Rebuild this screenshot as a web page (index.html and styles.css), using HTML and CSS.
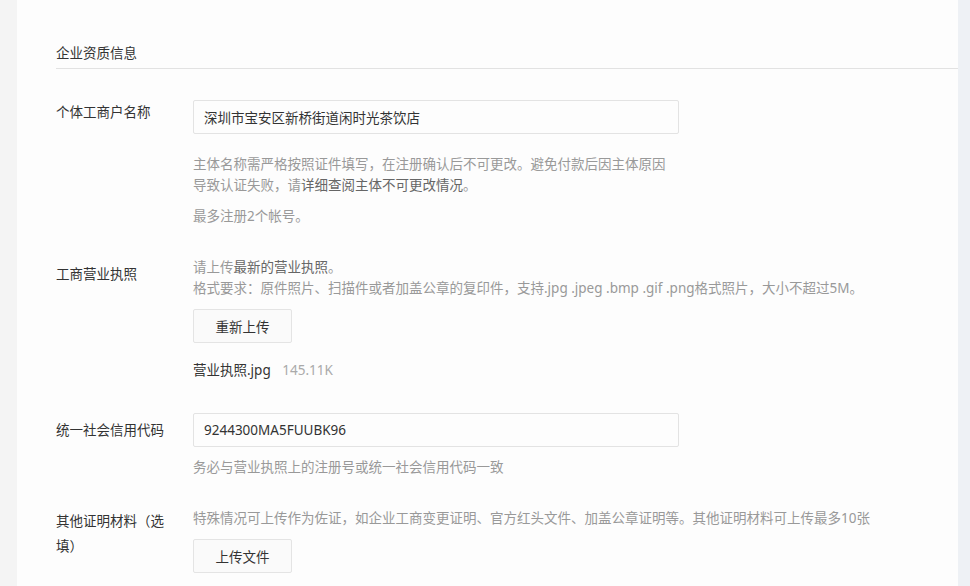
FILE: index.html
```html
<!DOCTYPE html>
<html>

<head>
  <meta charset="utf-8">
  <meta name="viewport" content="width=device-width">
  <title>企业资质信息</title>
  <link rel="stylesheet" href="styles.css">
</head>

<body>

  <div class="side-left"></div>

  <div class="panel">
    <h3 class="section-title">企业资质信息</h3>

    <!-- 个体工商户名称 -->
    <div class="form-row">
      <div class="label">个体工商户名称</div>
      <div class="field">
        <input class="text-input" type="text" value="深圳市宝安区新桥街道闲时光茶饮店" />
        <p class="help help-wide">主体名称需严格按照证件填写，在注册确认后不可更改。避免付款后因主体原因<br>导致认证失败，请<span class="strong">详细查阅主体不可更改情况</span>。</p>
        <p class="help help-gap">最多注册2个帐号。</p>
      </div>
    </div>

    <!-- 工商营业执照 -->
    <div class="form-row">
      <div class="label label-low">工商营业执照</div>
      <div class="field">
        <p class="help">请上传<span class="strong">最新的营业执照</span>。<br>格式要求：原件照片、扫描件或者加盖公章的复印件，支持.jpg .jpeg .bmp .gif .png格式照片，大小不超过5M。</p>
        <button class="btn">重新上传</button>
        <div class="file-line">
          <span class="file-name">营业执照.jpg</span>
          <span class="file-size">145.11K</span>
        </div>
      </div>
    </div>

    <!-- 统一社会信用代码 -->
    <div class="form-row form-row-code">
      <div class="label label-low">统一社会信用代码</div>
      <div class="field">
        <input class="text-input" type="text" value="9244300MA5FUUBK96" />
        <p class="help">务必与营业执照上的注册号或统一社会信用代码一致</p>
      </div>
    </div>

    <!-- 其他证明材料 -->
    <div class="form-row">
      <div class="label label-tight">其他证明材料（选填）</div>
      <div class="field">
        <p class="help">特殊情况可上传作为佐证，如企业工商变更证明、官方红头文件、加盖公章证明等。其他证明材料可上传最多10张</p>
        <button class="btn">上传文件</button>
      </div>
    </div>
  </div>

  <div class="side-right"></div>

</body>

</html>
```

FILE: styles.css
```css
body {
  margin: 0;
  display: flex;
  min-height: 586px;
  background: #fdfdfd;
  color: #333333;
  font-family: "Noto Sans", "Noto Sans CJK SC", "Liberation Sans", sans-serif;
  font-size: 13.5px;
  overflow: hidden;
}

.side-left {
  width: 17px;
  flex-shrink: 0;
  background-color: #f4f4f4;
}

.side-right {
  width: 12px;
  flex-shrink: 0;
  background-color: #eef1f5;
}

.panel {
  flex: 1;
  padding: 43px 0 0 39px;
  background-color: #fdfdfd;
}

.section-title {
  margin: 0;
  padding-bottom: 5px;
  border-bottom: 1px solid #e2e2e2;
  font-size: 13.5px;
  font-weight: normal;
  line-height: 20px;
  color: #333333;
}

.form-row {
  display: flex;
  margin-top: 30px;
}

.form-row:first-of-type {
  margin-top: 31px;
}

.form-row-code {
  margin-top: 32px;
}

.label {
  width: 112px;
  margin-right: 25px;
  flex-shrink: 0;
  line-height: 25px;
  color: #333333;
}

.label-low {
  padding-top: 5px;
}

.label-tight {
  padding-top: 1px;
}

.field {
  flex: 1;
}

.text-input {
  display: block;
  box-sizing: border-box;
  width: 486px;
  height: 34px;
  padding: 0 10px;
  margin: 0;
  border: 1px solid #e3e3e3;
  border-radius: 2px;
  background-color: #fdfdfd;
  font-family: inherit;
  font-size: 13.5px;
  color: #333333;
  outline: none;
}

.text-input + .help {
  margin-top: 10px;
}

.text-input + .help-wide {
  margin-top: 20px;
}

.help {
  margin: 0;
  line-height: 21px;
  color: #999999;
}

.help-gap {
  margin-top: 10px;
}

.help .strong {
  color: #666666;
}

.btn {
  display: block;
  box-sizing: border-box;
  width: 99px;
  height: 34px;
  margin-top: 10px;
  border: 1px solid #e4e4e4;
  border-radius: 2px;
  background-color: #fafafa;
  font-family: inherit;
  font-size: 13.5px;
  color: #333333;
  cursor: pointer;
}

.file-line {
  margin-top: 17px;
  line-height: 21px;
}

.file-name {
  color: #333333;
  margin-right: 8px;
}

.file-size {
  color: #aaaaaa;
}
```
